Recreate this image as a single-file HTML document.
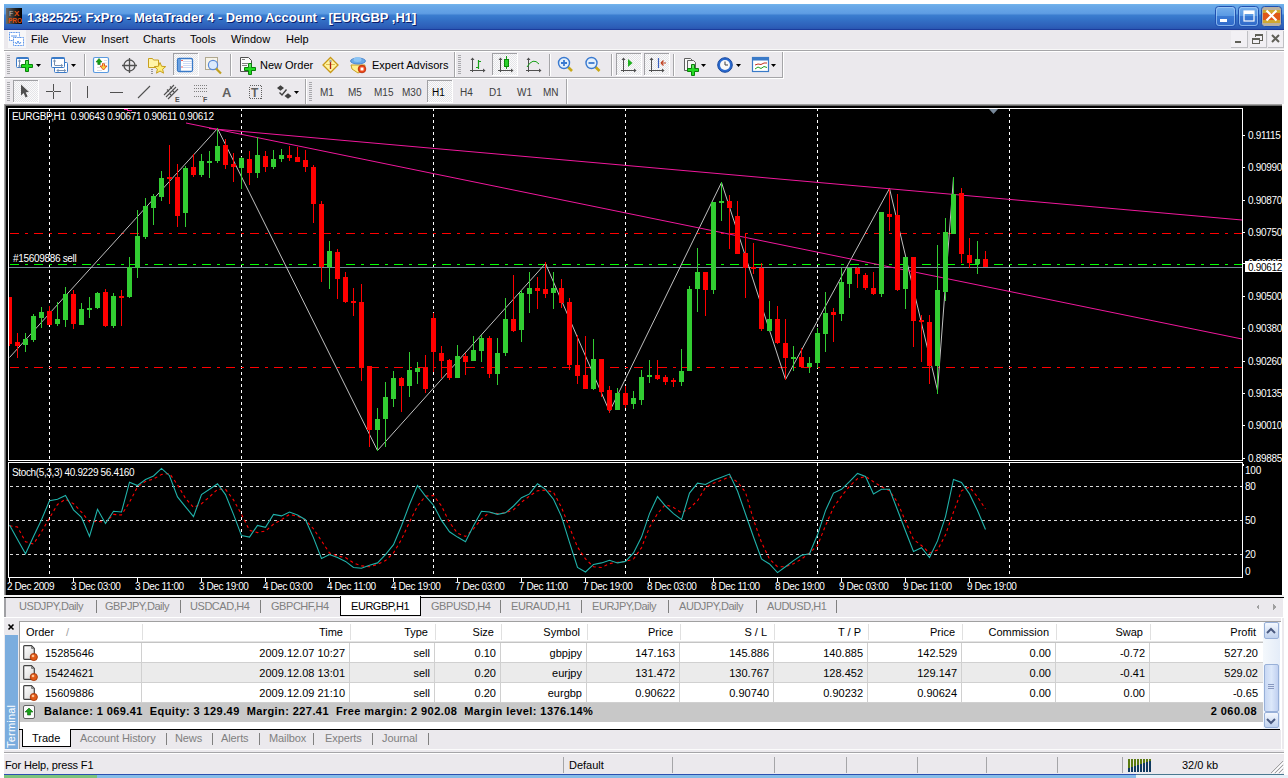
<!DOCTYPE html>
<html><head><meta charset="utf-8"><style>
html,body{margin:0;padding:0;}
body{width:1288px;height:778px;position:relative;overflow:hidden;background:#fff;font-family:'Liberation Sans', sans-serif;}
.a{position:absolute;}
.t{position:absolute;white-space:pre;font-size:11px;line-height:13px;color:#000;}
</style></head><body>
<div class="a" style="left:4px;top:4px;width:1280px;height:771px;background:#ebe9ed"></div>
<!-- title bar -->
<div class="a" style="left:4px;top:4px;width:1280px;height:26px;background:linear-gradient(to bottom,#72b6ec 0px,#6aa9e8 2px,#5f9ee4 9px,#5a98e0 10px,#3b7ed0 11px,#3473c8 15px,#2d5eb8 23px,#2a55b0 25px,#1c3c9c 25px,#1c3c9c 26px)"></div>
<div class="t" style="left:27px;top:10px;font-size:13px;line-height:15px;font-weight:bold;color:#fff;text-shadow:1px 1px 0 #0a1e6e">1382525: FxPro - MetaTrader 4 - Demo Account - [EURGBP ,H1]</div>
<!-- fxpro icon -->
<svg class="a" style="left:6px;top:8px" width="16" height="16">
<defs><linearGradient id="fxg" x1="0" y1="0" x2="1" y2="0"><stop offset="0" stop-color="#6a6a6a"/><stop offset="0.6" stop-color="#202020"/><stop offset="1" stop-color="#000"/></linearGradient></defs>
<rect width="16" height="16" fill="url(#fxg)"/>
<text x="3" y="8" font-family="Liberation Sans" font-size="7" fill="#c0c0c0">F</text>
<text x="8" y="8" font-family="Liberation Sans" font-size="8" font-weight="bold" fill="#e05010">X</text>
<text x="2" y="15" font-family="Liberation Sans" font-size="6.5" font-weight="bold" fill="#e05010">PRO</text>
</svg>
<!-- title buttons -->
<svg class="a" style="left:1214px;top:5px" width="70" height="24">
<defs><linearGradient id="tbg" x1="0" y1="0" x2="0" y2="1"><stop offset="0" stop-color="#78b0ec"/><stop offset="0.45" stop-color="#5a9ae4"/><stop offset="0.5" stop-color="#3a7ad4"/><stop offset="1" stop-color="#3068c8"/></linearGradient></defs>
<rect x="1.5" y="1.5" width="20" height="20" rx="3" fill="url(#tbg)" stroke="#2050b0"/>
<rect x="2.5" y="2.5" width="18" height="18" rx="2.5" fill="none" stroke="#a8d0f8" stroke-opacity="0.7"/>
<rect x="6" y="14" width="7" height="3" fill="#fff"/>
<rect x="24.5" y="1.5" width="20" height="20" rx="3" fill="url(#tbg)" stroke="#2050b0"/>
<rect x="25.5" y="2.5" width="18" height="18" rx="2.5" fill="none" stroke="#a8d0f8" stroke-opacity="0.7"/>
<rect x="30" y="6" width="10" height="10" fill="none" stroke="#fff" stroke-width="1.2"/><rect x="30" y="6" width="10" height="3" fill="#fff"/>
<rect x="47.5" y="1.5" width="20" height="20" rx="3" fill="#b8b0a0" stroke="#2050b0"/>
<rect x="49" y="5" width="17" height="13" fill="#d0a830"/><rect x="49" y="8" width="17" height="7" fill="#e05818"/>
<path d="M52.5 5.5 L62.5 15.5 M62.5 5.5 L52.5 15.5" stroke="#fff" stroke-width="2.2"/>
</svg>
<!-- menu icon -->
<svg class="a" style="left:8px;top:30px" width="18" height="18">
<rect x="0" y="0" width="18" height="18" fill="#f6f6f8"/>
<rect x="1.5" y="2.5" width="10" height="8" fill="#fff" stroke="#4a8ae8" stroke-dasharray="1 0.6"/>
<rect x="5.5" y="7.5" width="10" height="8" fill="#fff" stroke="#4a8ae8" stroke-dasharray="1 0.6"/>
<path d="M3 6 h6 M7 12 l1.5 2 l1.5 -3 l1.5 3 l1.5 -2" fill="none" stroke="#4a8ae8" stroke-width="0.9"/>
</svg>
<!-- MDI buttons -->
<svg class="a" style="left:1230px;top:30px" width="54" height="19" shape-rendering="crispEdges">
<rect x="1" y="1" width="16" height="17" fill="#f2f0f4"/><rect x="17" y="1" width="1" height="17" fill="#c0c0c4"/><rect x="1" y="17" width="17" height="1" fill="#c0c0c4"/>
<rect x="20" y="1" width="16" height="17" fill="#f2f0f4"/><rect x="36" y="1" width="1" height="17" fill="#c0c0c4"/><rect x="20" y="17" width="17" height="1" fill="#c0c0c4"/>
<rect x="38" y="1" width="16" height="17" fill="#f2f0f4"/><rect x="53" y="1" width="1" height="17" fill="#c0c0c4"/><rect x="38" y="17" width="16" height="1" fill="#c0c0c4"/>
<rect x="5" y="11" width="6" height="2" fill="#606058"/>
<rect x="22.5" y="8.5" width="7" height="5" fill="none" stroke="#606058"/><rect x="22" y="8" width="8" height="2" fill="#606058"/>
<path d="M25.5 7 V4.5 H32.5 V10.5 H30" fill="none" stroke="#606058"/><rect x="25" y="4" width="8" height="2" fill="#606058"/>
<path d="M42 5 L49 12 M49 5 L42 12" stroke="#606058" stroke-width="2" shape-rendering="auto"/>
</svg>
<!-- menu -->
<div class="a" style="left:4px;top:49px;width:1280px;height:1px;background:#f8f8f8"></div>
<div class="a" style="left:4px;top:50px;width:1280px;height:1px;background:#a5a5a8"></div>
<div class="a" style="left:4px;top:51px;width:1280px;height:1px;background:#fff"></div>
<div class="t" style="left:31px;top:33px">File</div>
<div class="t" style="left:62px;top:33px">View</div>
<div class="t" style="left:101px;top:33px">Insert</div>
<div class="t" style="left:143px;top:33px">Charts</div>
<div class="t" style="left:190px;top:33px">Tools</div>
<div class="t" style="left:231px;top:33px">Window</div>
<div class="t" style="left:286px;top:33px">Help</div>
<div class="a" style="left:4px;top:77px;width:779px;height:1px;background:#a5a5a8"></div>
<div class="a" style="left:4px;top:78px;width:780px;height:1px;background:#fff"></div>
<svg width="1288" height="54" viewBox="0 50 1288 54" style="position:absolute;left:0;top:50px" shape-rendering="crispEdges">
<defs><pattern id="chk" width="2" height="2" patternUnits="userSpaceOnUse"><rect width="2" height="2" fill="#fbfbfb"/><rect width="1" height="1" fill="#e4e4e8"/><rect x="1" y="1" width="1" height="1" fill="#e4e4e8"/></pattern></defs>
<rect x="454" y="52" width="1" height="25" fill="#a5a5a8"/><rect x="455" y="52" width="1" height="25" fill="#fff"/>
<rect x="782" y="52" width="1" height="26" fill="#a5a5a8"/><rect x="783" y="52" width="1" height="27" fill="#fff"/>
<rect x="4" y="52" width="1" height="25" fill="#fff"/>
<rect x="305" y="79" width="1" height="25" fill="#a5a5a8"/><rect x="306" y="79" width="1" height="25" fill="#fff"/>
<rect x="566" y="79" width="1" height="25" fill="#a5a5a8"/><rect x="567" y="79" width="1" height="25" fill="#fff"/>
<rect x="4" y="79" width="1" height="25" fill="#fff"/>
<rect x="7" y="55" width="3" height="1" fill="#a8a8ac"/><rect x="7" y="57" width="3" height="1" fill="#a8a8ac"/><rect x="7" y="59" width="3" height="1" fill="#a8a8ac"/><rect x="7" y="61" width="3" height="1" fill="#a8a8ac"/><rect x="7" y="63" width="3" height="1" fill="#a8a8ac"/><rect x="7" y="65" width="3" height="1" fill="#a8a8ac"/><rect x="7" y="67" width="3" height="1" fill="#a8a8ac"/><rect x="7" y="69" width="3" height="1" fill="#a8a8ac"/><rect x="7" y="71" width="3" height="1" fill="#a8a8ac"/><rect x="7" y="73" width="3" height="1" fill="#a8a8ac"/>
<rect x="458" y="55" width="3" height="1" fill="#a8a8ac"/><rect x="458" y="57" width="3" height="1" fill="#a8a8ac"/><rect x="458" y="59" width="3" height="1" fill="#a8a8ac"/><rect x="458" y="61" width="3" height="1" fill="#a8a8ac"/><rect x="458" y="63" width="3" height="1" fill="#a8a8ac"/><rect x="458" y="65" width="3" height="1" fill="#a8a8ac"/><rect x="458" y="67" width="3" height="1" fill="#a8a8ac"/><rect x="458" y="69" width="3" height="1" fill="#a8a8ac"/><rect x="458" y="71" width="3" height="1" fill="#a8a8ac"/><rect x="458" y="73" width="3" height="1" fill="#a8a8ac"/>
<rect x="7" y="82" width="3" height="1" fill="#a8a8ac"/><rect x="7" y="84" width="3" height="1" fill="#a8a8ac"/><rect x="7" y="86" width="3" height="1" fill="#a8a8ac"/><rect x="7" y="88" width="3" height="1" fill="#a8a8ac"/><rect x="7" y="90" width="3" height="1" fill="#a8a8ac"/><rect x="7" y="92" width="3" height="1" fill="#a8a8ac"/><rect x="7" y="94" width="3" height="1" fill="#a8a8ac"/><rect x="7" y="96" width="3" height="1" fill="#a8a8ac"/><rect x="7" y="98" width="3" height="1" fill="#a8a8ac"/><rect x="7" y="100" width="3" height="1" fill="#a8a8ac"/>
<rect x="309" y="82" width="3" height="1" fill="#a8a8ac"/><rect x="309" y="84" width="3" height="1" fill="#a8a8ac"/><rect x="309" y="86" width="3" height="1" fill="#a8a8ac"/><rect x="309" y="88" width="3" height="1" fill="#a8a8ac"/><rect x="309" y="90" width="3" height="1" fill="#a8a8ac"/><rect x="309" y="92" width="3" height="1" fill="#a8a8ac"/><rect x="309" y="94" width="3" height="1" fill="#a8a8ac"/><rect x="309" y="96" width="3" height="1" fill="#a8a8ac"/><rect x="309" y="98" width="3" height="1" fill="#a8a8ac"/><rect x="309" y="100" width="3" height="1" fill="#a8a8ac"/>
<g shape-rendering="auto">
<rect x="16.5" y="57.5" width="12" height="10" rx="1" fill="#fdfdff" stroke="#3a7ac8"/><rect x="16.5" y="57.5" width="12" height="1.5" fill="#3a7ac8"/>
<path d="M19.5 60.5 v6" stroke="#7890b0" stroke-width="1"/><path d="M17.8 61.5 L19.5 59.3 L21.2 61.5 Z M17.8 65.5 L19.5 67.7 L21.2 65.5 Z" fill="#7890b0"/>
<path d="M25.5 60.5 h3 v4 h4 v3 h-4 v4 h-3 v-4 h-4 v-3 h4 z" fill="#22dc22" stroke="#0a800a" stroke-width="1"/><rect x="26" y="61" width="2" height="3" fill="#a0f0a0" opacity="0.5"/>
<path d="M36 64 h5 l-2.5 3 z" fill="#000" shape-rendering="auto"/>
<rect x="54.5" y="62.5" width="13" height="10" rx="1" fill="#fdfdff" stroke="#3a7ac8"/>
<rect x="51.5" y="57.5" width="13" height="10" rx="1" fill="#fdfdff" stroke="#3a7ac8"/><rect x="51.5" y="57.5" width="13" height="1.5" fill="#3a7ac8"/>
<path d="M54.5 65.5 H61.5 M54.5 60.5 V65 M58 70.5 H64.5" stroke="#7890b0" stroke-width="1"/><path d="M52.8 61.5 L54.5 59.3 L56.2 61.5 Z M61 63.8 L63.2 65.5 L61 67.2 Z M64 68.8 L66.2 70.5 L64 72.2 Z M58.5 68.8 L56.3 70.5 L58.5 72.2 Z" fill="#7890b0"/>
<path d="M71 64 h5 l-2.5 3 z" fill="#000" shape-rendering="auto"/>
</g>
<rect x="84" y="54" width="1" height="22" fill="#a5a5a8"/><rect x="85" y="54" width="1" height="22" fill="#fff"/>
<g shape-rendering="auto">
<rect x="93.5" y="57.5" width="15" height="15" rx="1.5" fill="#fff" stroke="#5a9ae0" stroke-width="1.2"/>
<path d="M96 62 L99 58.5 L102 62 H100.2 V64.5 H97.8 V62 Z" fill="#18a018" stroke="#0a7a0a" stroke-width="0.6"/>
<path d="M100 66 H102.5 V63.5 H104.5 V66 H107 L103.5 70 Z" fill="#f8d040" stroke="#e04818" stroke-width="0.9"/>
<path d="M97 67.5 H100 M97 70.5 H102 M104 60.5 H107 M103 63 H107" stroke="#d0d0d8" stroke-width="0.8"/>
<circle cx="129.5" cy="65.5" r="5.5" fill="none" stroke="#505050" stroke-width="1.3"/>
<path d="M129.5 58 V73 M122 65.5 H137" stroke="#505050" stroke-width="1.3"/>
<path d="M148.5 58.5 h4 l1 1.5 h5 v7.5 h-10 z" fill="#fff4a8" stroke="#c8a020" stroke-width="1"/>
<path d="M152 69 v5" stroke="#404040" stroke-dasharray="1 1"/>
<path d="M160 62.5 L161.6 66.3 L165.7 66.6 L162.6 69.2 L163.5 73.2 L160 71 L156.5 73.2 L157.4 69.2 L154.3 66.6 L158.4 66.3 Z" fill="#fff07a" stroke="#c8a020" stroke-width="1"/>
</g>
<rect x="173" y="53" width="25" height="22" fill="url(#chk)"/><rect x="173" y="53" width="25" height="1" fill="#a0a0a4"/><rect x="173" y="53" width="1" height="22" fill="#a0a0a4"/><rect x="173" y="75" width="26" height="1" fill="#fff"/><rect x="198" y="53" width="1" height="23" fill="#fff"/>
<g shape-rendering="auto">
<rect x="177.5" y="58.5" width="15" height="13" rx="1.5" fill="#fff" stroke="#3a7ac8" stroke-width="1.3"/><rect x="178" y="59" width="3" height="12" fill="#6aa0e0"/>
<path d="M183 61.5 H192 M183 63.5 H192 M183 65.5 H192 M183 67.5 H192" stroke="#c0d0f0" stroke-width="0.8"/>
<path d="M182 60 v1 M182 66.5 v1" stroke="#e00000" stroke-width="1.2"/>
<rect x="205.5" y="57.5" width="12" height="12" fill="#f8f4e8" stroke="#b0a890"/>
<circle cx="213" cy="65" r="4.6" fill="#dceafc" stroke="#5a8ad8" stroke-width="1.2"/>
<path d="M216 68.5 L221 73.5" stroke="#c0a020" stroke-width="2.2"/>
</g>
<rect x="230" y="54" width="1" height="22" fill="#a5a5a8"/><rect x="231" y="54" width="1" height="22" fill="#fff"/>
<g shape-rendering="auto">
<path d="M240.5 57.5 h8 l3 3 v11 h-11 z" fill="#fafafa" stroke="#505050" stroke-width="1"/>
<path d="M242 59.5 h3 M242 63.5 h6 M242 65.5 h5" stroke="#808080" stroke-width="1"/>
<path d="M248.5 63.5 h3 v4 h4 v3 h-4 v4 h-3 v-4 h-4 v-3 h4 z" fill="#22dc22" stroke="#0a800a" stroke-width="1"/><rect x="249" y="64" width="2" height="3" fill="#a0f0a0" opacity="0.5"/>
</g>
<text x="260" y="69" font-family="Liberation Sans" font-size="11" fill="#000">New Order</text>
<g shape-rendering="auto">
<path d="M330.5 57.5 L338 65 L330.5 72.5 L323 65 Z" fill="#fff4a0" stroke="#c89818" stroke-width="1.3"/>
<path d="M326 64.5 H335" stroke="#d8b040" stroke-width="0.8"/><path d="M330.5 61 V69" stroke="#b02010" stroke-width="1.3"/><circle cx="330.5" cy="61" r="1.2" fill="#a0a0a0"/>
<path d="M351 65 L365 65 L364 70 L358 73 L352 69 Z" fill="#fff090" stroke="#c8a020" stroke-width="1"/>
<ellipse cx="358" cy="61" rx="7.5" ry="3" fill="#6aaae8" stroke="#3a7ac8" stroke-width="0.8"/><ellipse cx="357.5" cy="59.5" rx="4" ry="2.5" fill="#8cc4f4"/>
<circle cx="362" cy="69" r="3.8" fill="#f04818" stroke="#b02808" stroke-width="0.8"/><rect x="360.5" y="67.5" width="3" height="3" fill="#fff"/>
</g>
<text x="372" y="69" font-family="Liberation Sans" font-size="11" fill="#000">Expert Advisors</text>
<g shape-rendering="auto">
<path d="M472.5 58 V72 M470 70.5 H485" stroke="#505050" stroke-width="1"/><path d="M470.5 60 l2 -2.5 l2 2.5 z M483 68.5 l2.5 2 l-2.5 2 z" fill="#505050"/>
<path d="M478.5 60 V69 M476 67.5 H478.5 M478.5 61.5 H481" stroke="#18a018" stroke-width="1.2"/>
</g>
<rect x="492" y="53" width="25" height="22" fill="url(#chk)"/><rect x="492" y="53" width="25" height="1" fill="#a0a0a4"/><rect x="492" y="53" width="1" height="22" fill="#a0a0a4"/><rect x="492" y="75" width="26" height="1" fill="#fff"/><rect x="517" y="53" width="1" height="23" fill="#fff"/>
<g shape-rendering="auto">
<path d="M500.5 58 V72 M498 70.5 H513" stroke="#505050" stroke-width="1"/><path d="M498.5 60 l2 -2.5 l2 2.5 z M511 68.5 l2.5 2 l-2.5 2 z" fill="#505050"/>
<path d="M506.5 56 V69" stroke="#18a018" stroke-width="1"/><rect x="504.5" y="59.5" width="4" height="7" fill="#2ad02a" stroke="#0a8a0a" stroke-width="1"/>
<path d="M528.5 58 V72 M526 70.5 H541" stroke="#505050" stroke-width="1"/><path d="M526.5 60 l2 -2.5 l2 2.5 z M539 68.5 l2.5 2 l-2.5 2 z" fill="#505050"/>
<path d="M527 67 Q533 57 539 64" fill="none" stroke="#18a018" stroke-width="1"/>
</g>
<rect x="549" y="54" width="1" height="22" fill="#a5a5a8"/><rect x="550" y="54" width="1" height="22" fill="#fff"/>
<g shape-rendering="auto">
<path d="M567 66 L572 71" stroke="#c8a818" stroke-width="2.6"/>
<circle cx="564" cy="63" r="5.5" fill="#e4f0fc" stroke="#3a7ad0" stroke-width="1.4"/>
<path d="M561 63 H567 M564 60 V66" stroke="#3a7ad0" stroke-width="1.8"/>
<path d="M594.5 66 L599.5 71" stroke="#c8a818" stroke-width="2.6"/>
<circle cx="591.5" cy="63" r="5.5" fill="#e4f0fc" stroke="#3a7ad0" stroke-width="1.4"/>
<path d="M588.5 63 H594.5" stroke="#3a7ad0" stroke-width="1.8"/>
</g>
<rect x="611" y="54" width="1" height="22" fill="#a5a5a8"/><rect x="612" y="54" width="1" height="22" fill="#fff"/>
<rect x="616" y="53" width="25" height="22" fill="url(#chk)"/><rect x="616" y="53" width="25" height="1" fill="#a0a0a4"/><rect x="616" y="53" width="1" height="22" fill="#a0a0a4"/><rect x="616" y="75" width="26" height="1" fill="#fff"/><rect x="641" y="53" width="1" height="23" fill="#fff"/>
<rect x="644" y="53" width="25" height="22" fill="url(#chk)"/><rect x="644" y="53" width="25" height="1" fill="#a0a0a4"/><rect x="644" y="53" width="1" height="22" fill="#a0a0a4"/><rect x="644" y="75" width="26" height="1" fill="#fff"/><rect x="669" y="53" width="1" height="23" fill="#fff"/>
<g shape-rendering="auto">
<path d="M623.5 58 V72 M621 70.5 H636" stroke="#505050" stroke-width="1"/><path d="M621.5 60 l2 -2.5 l2 2.5 z M634 68.5 l2.5 2 l-2.5 2 z" fill="#505050"/>
<path d="M628 59 L632.5 63 L628 67 Z" fill="#20b020"/>
<path d="M651.5 58 V72 M649 70.5 H664" stroke="#505050" stroke-width="1"/><path d="M649.5 60 l2 -2.5 l2 2.5 z M662 68.5 l2.5 2 l-2.5 2 z" fill="#505050"/>
<path d="M658.5 58 V68" stroke="#3a60c0" stroke-width="1.2"/><path d="M661 63 L666 63 M661 63 l2.5 -2.5 M661 63 l2.5 2.5" stroke="#c04020" stroke-width="1.2"/>
</g>
<rect x="673" y="54" width="1" height="22" fill="#a5a5a8"/><rect x="674" y="54" width="1" height="22" fill="#fff"/>
<g shape-rendering="auto">
<path d="M684.5 58.5 h6 l2 2 v10 h-8 z" fill="#fafafa" stroke="#606060"/><path d="M687.5 60.5 h6 l2 2 v7 h-8 z" fill="#f4f4f4" stroke="#606060"/>
<path d="M691.5 64.5 h3 v4 h4 v3 h-4 v4 h-3 v-4 h-4 v-3 h4 z" fill="#22dc22" stroke="#0a800a" stroke-width="1"/><rect x="692" y="65" width="2" height="3" fill="#a0f0a0" opacity="0.5"/>
<path d="M701 64 h5 l-2.5 3 z" fill="#000" shape-rendering="auto"/>
<circle cx="725" cy="65" r="7.3" fill="#2a6ad0" stroke="#1a4aa0" stroke-width="1"/><circle cx="725" cy="65" r="5" fill="#f8f8f8"/><path d="M725 61.5 V65 H728" stroke="#404040" stroke-width="1" fill="none"/>
<path d="M736 64 h5 l-2.5 3 z" fill="#000" shape-rendering="auto"/>
<rect x="752.5" y="57.5" width="16" height="14" fill="#fff" stroke="#3a7ac8" stroke-width="1.2"/><rect x="753" y="58" width="15" height="2.5" fill="#3a7ac8"/>
<path d="M755 65 l3 -1 l3 0.5 l3 -1.5 l3 0" fill="none" stroke="#c03020" stroke-width="1"/><path d="M755 69 l3 -2 l3 1.5 l3 -2 l3 1" fill="none" stroke="#20a020" stroke-width="1"/>
<path d="M771 64 h5 l-2.5 3 z" fill="#000" shape-rendering="auto"/>
</g>
<rect x="13" y="80" width="25" height="22" fill="url(#chk)"/><rect x="13" y="80" width="25" height="1" fill="#a0a0a4"/><rect x="13" y="80" width="1" height="22" fill="#a0a0a4"/><rect x="13" y="102" width="26" height="1" fill="#fff"/><rect x="38" y="80" width="1" height="23" fill="#fff"/>
<g shape-rendering="auto">
<path d="M21 84.5 L21 95.5 L23.6 93 L25.6 97.5 L27.6 96.6 L25.7 92.3 L29 92 Z" fill="#505050"/>
</g>
<path d="M46 91.5 H61 M53.5 84 V99" stroke="#505050" stroke-width="1"/><rect x="53" y="91" width="1" height="1" fill="#ebe9ed"/>
<rect x="70" y="82" width="1" height="20" fill="#a5a5a8"/><rect x="71" y="82" width="1" height="20" fill="#fff"/>
<rect x="87" y="86" width="1" height="12" fill="#505050"/>
<rect x="110" y="92" width="13" height="1" fill="#505050"/>
<g shape-rendering="auto">
<path d="M138 98 L150 86" stroke="#505050" stroke-width="1.1"/>
<path d="M164 95 L174 85 M166 97 L176 87 M168 99 L178 89 M167 89.5 L169 91.5 M170 86.5 L172 88.5 M169 93 L171 95 M172 90 L174 92" stroke="#505050" stroke-width="1.1"/>
<text x="175" y="102" font-family="Liberation Sans" font-size="7" font-weight="bold" fill="#505050">E</text>
</g>
<path d="M193.5 85 H207 M193.5 88 H207 M193.5 91 H207 M193.5 96 H203" stroke="#808080" stroke-dasharray="1 1"/>
<text x="203" y="102" font-family="Liberation Sans" font-size="7" font-weight="bold" fill="#505050">F</text>
<text x="222" y="97" font-family="Liberation Sans" font-size="13" font-weight="bold" fill="#606060" shape-rendering="auto">A</text>
<rect x="249.5" y="85.5" width="12" height="13" fill="none" stroke="#606060" stroke-dasharray="1 1"/>
<text x="251" y="97" font-family="Liberation Sans" font-size="12" font-weight="bold" fill="#606060">T</text>
<g shape-rendering="auto">
<path d="M277 88 l3.5 -2.8 l3.5 2.8 l-3.5 2.8 z M284.5 96 l3.5 -2.8 l3.5 2.8 l-3.5 2.8 z" fill="#404040"/><path d="M279.5 92.5 L282 95 L286.5 89.5" fill="none" stroke="#404040" stroke-width="1.4"/>
<path d="M294 91 h5 l-2.5 3 z" fill="#000" shape-rendering="auto"/>
</g>
<rect x="427" y="80" width="25" height="22" fill="url(#chk)"/><rect x="427" y="80" width="25" height="1" fill="#a0a0a4"/><rect x="427" y="80" width="1" height="22" fill="#a0a0a4"/><rect x="427" y="102" width="26" height="1" fill="#fff"/><rect x="452" y="80" width="1" height="23" fill="#fff"/>
</svg>
<div class="t" style="left:320px;top:86px;font-size:10px;color:#404040">M1</div>
<div class="t" style="left:348px;top:86px;font-size:10px;color:#404040">M5</div>
<div class="t" style="left:374px;top:86px;font-size:10px;color:#404040">M15</div>
<div class="t" style="left:402px;top:86px;font-size:10px;color:#404040">M30</div>
<div class="t" style="left:432px;top:86px;font-size:10px;color:#000">H1</div>
<div class="t" style="left:460px;top:86px;font-size:10px;color:#404040">H4</div>
<div class="t" style="left:489px;top:86px;font-size:10px;color:#404040">D1</div>
<div class="t" style="left:517px;top:86px;font-size:10px;color:#404040">W1</div>
<div class="t" style="left:543px;top:86px;font-size:10px;color:#404040">MN</div>
<svg width="1280" height="492" viewBox="4 104 1280 492" style="position:absolute;left:4px;top:104px" shape-rendering="crispEdges">
<rect x="4" y="104" width="1280" height="492" fill="#000"/>
<rect x="4" y="104" width="1280" height="1" fill="#a0a0a0"/>
<rect x="4" y="105" width="1280" height="1" fill="#696969"/>
<rect x="4" y="104" width="1" height="492" fill="#a0a0a0"/>
<rect x="5" y="105" width="1" height="491" fill="#696969"/>
<rect x="1282" y="104" width="2" height="492" fill="#fff"/>
<line x1="49.5" y1="108" x2="49.5" y2="460" stroke="#fff" stroke-dasharray="3 3"/>
<line x1="49.5" y1="463" x2="49.5" y2="577" stroke="#fff" stroke-dasharray="3 3"/>
<line x1="241.5" y1="108" x2="241.5" y2="460" stroke="#fff" stroke-dasharray="3 3"/>
<line x1="241.5" y1="463" x2="241.5" y2="577" stroke="#fff" stroke-dasharray="3 3"/>
<line x1="433.5" y1="108" x2="433.5" y2="460" stroke="#fff" stroke-dasharray="3 3"/>
<line x1="433.5" y1="463" x2="433.5" y2="577" stroke="#fff" stroke-dasharray="3 3"/>
<line x1="625.5" y1="108" x2="625.5" y2="460" stroke="#fff" stroke-dasharray="3 3"/>
<line x1="625.5" y1="463" x2="625.5" y2="577" stroke="#fff" stroke-dasharray="3 3"/>
<line x1="817.5" y1="108" x2="817.5" y2="460" stroke="#fff" stroke-dasharray="3 3"/>
<line x1="817.5" y1="463" x2="817.5" y2="577" stroke="#fff" stroke-dasharray="3 3"/>
<line x1="1009.5" y1="108" x2="1009.5" y2="460" stroke="#fff" stroke-dasharray="3 3"/>
<line x1="1009.5" y1="463" x2="1009.5" y2="577" stroke="#fff" stroke-dasharray="3 3"/>
<line x1="10" y1="486.5" x2="1242" y2="486.5" stroke="#d8d8d8" stroke-dasharray="3 3"/>
<line x1="10" y1="520.5" x2="1242" y2="520.5" stroke="#d8d8d8" stroke-dasharray="3 3"/>
<line x1="10" y1="554.5" x2="1242" y2="554.5" stroke="#d8d8d8" stroke-dasharray="3 3"/>
<line x1="10" y1="233.5" x2="1242" y2="233.5" stroke="#ff0000" stroke-dasharray="9 6 3 6"/>
<line x1="10" y1="367.5" x2="1242" y2="367.5" stroke="#ff0000" stroke-dasharray="9 6 3 6"/>
<line x1="10" y1="264.5" x2="1242" y2="264.5" stroke="#00ff00" stroke-dasharray="9 6 3 6"/>
<rect x="9" y="267" width="1233" height="1" fill="#778899"/>
<defs><clipPath id="cm"><rect x="9" y="109" width="1233" height="351"/></clipPath><clipPath id="cs"><rect x="9" y="463" width="1233" height="114"/></clipPath></defs>
<g clip-path="url(#cm)" shape-rendering="auto"><polyline points="9.5,357.5 217.5,128.5 377.5,450.5 545.5,263.5 609.5,411.5 721.5,182.5 785.5,379.5 889.5,188.5 937.5,390.5 953.5,177.5" fill="none" stroke="#c0c0c0" stroke-width="1"/>
<line x1="186" y1="123" x2="1242" y2="339" stroke="#f0189c" stroke-width="1"/>
<line x1="209" y1="128.5" x2="1242" y2="220" stroke="#f0189c" stroke-width="1"/></g>
<rect x="124" y="109" width="4" height="1" fill="#f0189c"/><rect x="127" y="110" width="5" height="1" fill="#f0189c"/>
<g clip-path="url(#cs)" shape-rendering="auto"><polyline points="9.5,525.7 17.5,527 25.5,541.7 33.5,544 41.5,531.8 49.5,518 57.5,504.5 65.5,499.2 73.5,503.7 81.5,512 89.5,522 97.5,521.2 105.5,522.7 113.5,514.4 121.5,515 129.5,502.2 137.5,487 145.5,481.4 153.5,479 161.5,474.5 169.5,473.4 177.5,484.8 185.5,498.4 193.5,507.5 201.5,503.7 209.5,496.9 217.5,489.3 225.5,489.3 233.5,499.9 241.5,514.4 249.5,530.3 257.5,532.6 265.5,531 273.5,524.2 281.5,519.7 289.5,514.4 297.5,516.2 305.5,520 313.5,528.8 321.5,540.9 329.5,553 337.5,556 345.5,557.6 353.5,562.9 361.5,565.9 369.5,566.7 377.5,564.4 385.5,560.6 393.5,553 401.5,539.4 409.5,522 417.5,506 425.5,496.1 433.5,495.4 441.5,506 449.5,522.4 457.5,533.3 465.5,536.4 473.5,528.8 481.5,518.9 489.5,512.5 497.5,513.6 505.5,512.8 513.5,509.8 521.5,502.2 529.5,496.1 537.5,490.8 545.5,490.1 553.5,492.3 561.5,507.5 569.5,527.3 577.5,547 585.5,559 593.5,566.7 601.5,567.5 609.5,563.7 617.5,562.2 625.5,561.4 633.5,559.1 641.5,547.7 649.5,527.3 657.5,513.6 665.5,504.5 673.5,507.5 681.5,512.8 689.5,508.3 697.5,500.7 705.5,487.5 713.5,483.2 721.5,480.2 729.5,476.8 737.5,482 745.5,492.3 753.5,519.7 761.5,542.4 769.5,559.1 777.5,566.7 785.5,566.7 793.5,563.7 801.5,559.1 809.5,553 817.5,545.5 825.5,525.7 833.5,507.5 841.5,496.1 849.5,486.3 857.5,478.7 865.5,476.4 873.5,481.7 881.5,486.7 889.5,490.8 897.5,502.2 905.5,521.2 913.5,539.4 921.5,545.5 929.5,553 937.5,550 945.5,534.8 953.5,512 961.5,490.8 969.5,487 977.5,496.9 985.5,509" fill="none" stroke="#ff0000" stroke-width="1.1" stroke-dasharray="3 3"/>
<polyline points="9.5,525 17.5,539.4 25.5,553.8 33.5,536.4 41.5,519.7 49.5,500.7 57.5,499.2 65.5,495.4 73.5,509.8 81.5,517.4 89.5,536.4 97.5,509.3 105.5,523.5 113.5,511.3 121.5,512 129.5,482.2 137.5,485.5 145.5,479.5 153.5,476 161.5,468.4 169.5,475.7 177.5,496.9 185.5,506.8 193.5,516.6 201.5,494.6 209.5,489.3 217.5,483.7 225.5,494.6 233.5,514.4 241.5,535.6 249.5,537.1 257.5,525.4 265.5,527.3 273.5,514.4 281.5,515.9 289.5,512 297.5,515 305.5,519.7 313.5,537.9 321.5,558.4 329.5,554.6 337.5,557.6 345.5,561.4 353.5,567.5 361.5,568.2 369.5,565.2 377.5,562.9 385.5,554.6 393.5,544.7 401.5,525.7 409.5,504.5 417.5,485.5 425.5,496.1 433.5,505.2 441.5,520.4 449.5,531.8 457.5,537.1 465.5,541.7 473.5,525.7 481.5,511.3 489.5,512 497.5,514.4 505.5,512.8 513.5,506 521.5,497.7 529.5,493.9 537.5,483.7 545.5,489.3 553.5,499.2 561.5,516.6 569.5,542.4 577.5,567.5 585.5,572 593.5,564.4 601.5,562.9 609.5,560.3 617.5,562.9 625.5,561.4 633.5,553 641.5,537.1 649.5,513.6 657.5,496.6 665.5,506 673.5,513.6 681.5,519.7 689.5,493.1 697.5,483.2 705.5,484.5 713.5,480.2 721.5,477.2 729.5,474.1 737.5,491 745.5,514 753.5,537 761.5,559 769.5,564 777.5,572.6 785.5,566.7 793.5,560.6 801.5,555.3 809.5,553.8 817.5,534.8 825.5,510.6 833.5,493.1 841.5,489.3 849.5,481.7 857.5,473.4 865.5,476.4 873.5,493.9 881.5,489.3 889.5,489.3 897.5,510 905.5,531 913.5,551.5 921.5,547.7 929.5,557.6 937.5,540.9 945.5,516.6 953.5,479.5 961.5,482.5 969.5,493.9 977.5,510.6 985.5,529.5" fill="none" stroke="#20b2aa" stroke-width="1.1"/></g>
<g clip-path="url(#cm)">
<rect x="9" y="297" width="1" height="49" fill="#ff0000"/><rect x="7" y="297" width="5" height="47" fill="#ff0000"/>
<rect x="17" y="333" width="1" height="25" fill="#ff0000"/><rect x="15" y="342" width="5" height="4" fill="#ff0000"/>
<rect x="25" y="333" width="1" height="19" fill="#32cd32"/><rect x="23" y="339" width="5" height="6" fill="#32cd32"/>
<rect x="33" y="314" width="1" height="28" fill="#32cd32"/><rect x="31" y="316" width="5" height="24" fill="#32cd32"/>
<rect x="41" y="307" width="1" height="21" fill="#32cd32"/><rect x="39" y="312" width="5" height="6" fill="#32cd32"/>
<rect x="49" y="306" width="1" height="19" fill="#ff0000"/><rect x="47" y="311" width="5" height="14" fill="#ff0000"/>
<rect x="57" y="302" width="1" height="24" fill="#32cd32"/><rect x="55" y="319" width="5" height="5" fill="#32cd32"/>
<rect x="65" y="287" width="1" height="40" fill="#32cd32"/><rect x="63" y="294" width="5" height="26" fill="#32cd32"/>
<rect x="73" y="290" width="1" height="39" fill="#ff0000"/><rect x="71" y="294" width="5" height="30" fill="#ff0000"/>
<rect x="81" y="303" width="1" height="22" fill="#32cd32"/><rect x="79" y="309" width="5" height="16" fill="#32cd32"/>
<rect x="89" y="297" width="1" height="21" fill="#32cd32"/><rect x="87" y="308" width="5" height="2" fill="#32cd32"/>
<rect x="97" y="292" width="1" height="17" fill="#32cd32"/><rect x="95" y="293" width="5" height="15" fill="#32cd32"/>
<rect x="105" y="289" width="1" height="38" fill="#ff0000"/><rect x="103" y="292" width="5" height="34" fill="#ff0000"/>
<rect x="113" y="293" width="1" height="35" fill="#32cd32"/><rect x="111" y="296" width="5" height="30" fill="#32cd32"/>
<rect x="121" y="290" width="1" height="36" fill="#ff0000"/><rect x="119" y="296" width="5" height="2" fill="#ff0000"/>
<rect x="129" y="257" width="1" height="41" fill="#32cd32"/><rect x="127" y="267" width="5" height="30" fill="#32cd32"/>
<rect x="137" y="210" width="1" height="68" fill="#32cd32"/><rect x="135" y="236" width="5" height="32" fill="#32cd32"/>
<rect x="145" y="198" width="1" height="41" fill="#32cd32"/><rect x="143" y="206" width="5" height="31" fill="#32cd32"/>
<rect x="153" y="194" width="1" height="31" fill="#32cd32"/><rect x="151" y="196" width="5" height="12" fill="#32cd32"/>
<rect x="161" y="171" width="1" height="30" fill="#32cd32"/><rect x="159" y="178" width="5" height="19" fill="#32cd32"/>
<rect x="169" y="145" width="1" height="59" fill="#ff0000"/><rect x="167" y="177" width="5" height="2" fill="#ff0000"/>
<rect x="177" y="164" width="1" height="63" fill="#ff0000"/><rect x="175" y="177" width="5" height="39" fill="#ff0000"/>
<rect x="185" y="166" width="1" height="61" fill="#32cd32"/><rect x="183" y="168" width="5" height="45" fill="#32cd32"/>
<rect x="193" y="154" width="1" height="23" fill="#ff0000"/><rect x="191" y="167" width="5" height="8" fill="#ff0000"/>
<rect x="201" y="154" width="1" height="23" fill="#32cd32"/><rect x="199" y="161" width="5" height="14" fill="#32cd32"/>
<rect x="209" y="151" width="1" height="27" fill="#32cd32"/><rect x="207" y="161" width="5" height="2" fill="#32cd32"/>
<rect x="217" y="128" width="1" height="35" fill="#32cd32"/><rect x="215" y="146" width="5" height="15" fill="#32cd32"/>
<rect x="225" y="139" width="1" height="30" fill="#ff0000"/><rect x="223" y="145" width="5" height="20" fill="#ff0000"/>
<rect x="233" y="153" width="1" height="29" fill="#ff0000"/><rect x="231" y="164" width="5" height="3" fill="#ff0000"/>
<rect x="241" y="157" width="1" height="32" fill="#32cd32"/><rect x="239" y="158" width="5" height="10" fill="#32cd32"/>
<rect x="249" y="151" width="1" height="34" fill="#ff0000"/><rect x="247" y="159" width="5" height="14" fill="#ff0000"/>
<rect x="257" y="137" width="1" height="41" fill="#32cd32"/><rect x="255" y="155" width="5" height="18" fill="#32cd32"/>
<rect x="265" y="151" width="1" height="21" fill="#ff0000"/><rect x="263" y="156" width="5" height="11" fill="#ff0000"/>
<rect x="273" y="150" width="1" height="19" fill="#32cd32"/><rect x="271" y="159" width="5" height="8" fill="#32cd32"/>
<rect x="281" y="149" width="1" height="13" fill="#32cd32"/><rect x="279" y="155" width="5" height="4" fill="#32cd32"/>
<rect x="289" y="146" width="1" height="15" fill="#ff0000"/><rect x="287" y="155" width="5" height="3" fill="#ff0000"/>
<rect x="297" y="147" width="1" height="15" fill="#ff0000"/><rect x="295" y="157" width="5" height="5" fill="#ff0000"/>
<rect x="305" y="150" width="1" height="22" fill="#ff0000"/><rect x="303" y="160" width="5" height="7" fill="#ff0000"/>
<rect x="313" y="165" width="1" height="58" fill="#ff0000"/><rect x="311" y="167" width="5" height="37" fill="#ff0000"/>
<rect x="321" y="201" width="1" height="81" fill="#ff0000"/><rect x="319" y="204" width="5" height="63" fill="#ff0000"/>
<rect x="329" y="241" width="1" height="48" fill="#32cd32"/><rect x="327" y="251" width="5" height="16" fill="#32cd32"/>
<rect x="337" y="249" width="1" height="50" fill="#ff0000"/><rect x="335" y="252" width="5" height="27" fill="#ff0000"/>
<rect x="345" y="272" width="1" height="31" fill="#ff0000"/><rect x="343" y="277" width="5" height="25" fill="#ff0000"/>
<rect x="353" y="288" width="1" height="28" fill="#ff0000"/><rect x="351" y="301" width="5" height="2" fill="#ff0000"/>
<rect x="361" y="284" width="1" height="97" fill="#ff0000"/><rect x="359" y="302" width="5" height="66" fill="#ff0000"/>
<rect x="369" y="366" width="1" height="81" fill="#ff0000"/><rect x="367" y="366" width="5" height="64" fill="#ff0000"/>
<rect x="377" y="408" width="1" height="43" fill="#32cd32"/><rect x="375" y="419" width="5" height="11" fill="#32cd32"/>
<rect x="385" y="382" width="1" height="65" fill="#32cd32"/><rect x="383" y="397" width="5" height="22" fill="#32cd32"/>
<rect x="393" y="371" width="1" height="36" fill="#32cd32"/><rect x="391" y="378" width="5" height="21" fill="#32cd32"/>
<rect x="401" y="377" width="1" height="35" fill="#ff0000"/><rect x="399" y="378" width="5" height="8" fill="#ff0000"/>
<rect x="409" y="352" width="1" height="45" fill="#32cd32"/><rect x="407" y="370" width="5" height="16" fill="#32cd32"/>
<rect x="417" y="362" width="1" height="22" fill="#32cd32"/><rect x="415" y="368" width="5" height="4" fill="#32cd32"/>
<rect x="425" y="355" width="1" height="38" fill="#ff0000"/><rect x="423" y="367" width="5" height="22" fill="#ff0000"/>
<rect x="433" y="313" width="1" height="59" fill="#ff0000"/><rect x="431" y="318" width="5" height="34" fill="#ff0000"/>
<rect x="441" y="346" width="1" height="32" fill="#ff0000"/><rect x="439" y="353" width="5" height="8" fill="#ff0000"/>
<rect x="449" y="359" width="1" height="21" fill="#ff0000"/><rect x="447" y="360" width="5" height="18" fill="#ff0000"/>
<rect x="457" y="345" width="1" height="33" fill="#32cd32"/><rect x="455" y="356" width="5" height="22" fill="#32cd32"/>
<rect x="465" y="353" width="1" height="22" fill="#ff0000"/><rect x="463" y="356" width="5" height="6" fill="#ff0000"/>
<rect x="473" y="336" width="1" height="25" fill="#32cd32"/><rect x="471" y="350" width="5" height="11" fill="#32cd32"/>
<rect x="481" y="335" width="1" height="27" fill="#32cd32"/><rect x="479" y="338" width="5" height="13" fill="#32cd32"/>
<rect x="489" y="336" width="1" height="42" fill="#ff0000"/><rect x="487" y="338" width="5" height="36" fill="#ff0000"/>
<rect x="497" y="338" width="1" height="47" fill="#32cd32"/><rect x="495" y="353" width="5" height="21" fill="#32cd32"/>
<rect x="505" y="298" width="1" height="58" fill="#32cd32"/><rect x="503" y="319" width="5" height="34" fill="#32cd32"/>
<rect x="513" y="275" width="1" height="57" fill="#ff0000"/><rect x="511" y="319" width="5" height="12" fill="#ff0000"/>
<rect x="521" y="290" width="1" height="52" fill="#32cd32"/><rect x="519" y="293" width="5" height="37" fill="#32cd32"/>
<rect x="529" y="272" width="1" height="41" fill="#32cd32"/><rect x="527" y="288" width="5" height="6" fill="#32cd32"/>
<rect x="537" y="277" width="1" height="32" fill="#ff0000"/><rect x="535" y="288" width="5" height="3" fill="#ff0000"/>
<rect x="545" y="262" width="1" height="36" fill="#ff0000"/><rect x="543" y="289" width="5" height="5" fill="#ff0000"/>
<rect x="553" y="272" width="1" height="37" fill="#32cd32"/><rect x="551" y="288" width="5" height="5" fill="#32cd32"/>
<rect x="561" y="279" width="1" height="29" fill="#ff0000"/><rect x="559" y="288" width="5" height="15" fill="#ff0000"/>
<rect x="569" y="298" width="1" height="72" fill="#ff0000"/><rect x="567" y="302" width="5" height="63" fill="#ff0000"/>
<rect x="577" y="335" width="1" height="49" fill="#ff0000"/><rect x="575" y="365" width="5" height="11" fill="#ff0000"/>
<rect x="585" y="336" width="1" height="53" fill="#ff0000"/><rect x="583" y="375" width="5" height="14" fill="#ff0000"/>
<rect x="593" y="339" width="1" height="51" fill="#32cd32"/><rect x="591" y="359" width="5" height="30" fill="#32cd32"/>
<rect x="601" y="359" width="1" height="38" fill="#ff0000"/><rect x="599" y="359" width="5" height="33" fill="#ff0000"/>
<rect x="609" y="386" width="1" height="27" fill="#ff0000"/><rect x="607" y="390" width="5" height="20" fill="#ff0000"/>
<rect x="617" y="388" width="1" height="22" fill="#32cd32"/><rect x="615" y="393" width="5" height="17" fill="#32cd32"/>
<rect x="625" y="386" width="1" height="22" fill="#ff0000"/><rect x="623" y="393" width="5" height="12" fill="#ff0000"/>
<rect x="633" y="391" width="1" height="18" fill="#32cd32"/><rect x="631" y="398" width="5" height="6" fill="#32cd32"/>
<rect x="641" y="370" width="1" height="35" fill="#32cd32"/><rect x="639" y="377" width="5" height="23" fill="#32cd32"/>
<rect x="649" y="360" width="1" height="23" fill="#32cd32"/><rect x="647" y="375" width="5" height="2" fill="#32cd32"/>
<rect x="657" y="360" width="1" height="20" fill="#ff0000"/><rect x="655" y="375" width="5" height="4" fill="#ff0000"/>
<rect x="665" y="375" width="1" height="10" fill="#ff0000"/><rect x="663" y="377" width="5" height="5" fill="#ff0000"/>
<rect x="673" y="378" width="1" height="9" fill="#ff0000"/><rect x="671" y="380" width="5" height="2" fill="#ff0000"/>
<rect x="681" y="349" width="1" height="37" fill="#32cd32"/><rect x="679" y="371" width="5" height="11" fill="#32cd32"/>
<rect x="689" y="286" width="1" height="85" fill="#32cd32"/><rect x="687" y="289" width="5" height="82" fill="#32cd32"/>
<rect x="697" y="248" width="1" height="64" fill="#32cd32"/><rect x="695" y="272" width="5" height="17" fill="#32cd32"/>
<rect x="705" y="272" width="1" height="44" fill="#ff0000"/><rect x="703" y="272" width="5" height="18" fill="#ff0000"/>
<rect x="713" y="202" width="1" height="92" fill="#32cd32"/><rect x="711" y="202" width="5" height="88" fill="#32cd32"/>
<rect x="721" y="182" width="1" height="39" fill="#32cd32"/><rect x="719" y="201" width="5" height="2" fill="#32cd32"/>
<rect x="729" y="195" width="1" height="54" fill="#ff0000"/><rect x="727" y="201" width="5" height="7" fill="#ff0000"/>
<rect x="737" y="201" width="1" height="53" fill="#ff0000"/><rect x="735" y="216" width="5" height="38" fill="#ff0000"/>
<rect x="745" y="233" width="1" height="65" fill="#ff0000"/><rect x="743" y="253" width="5" height="15" fill="#ff0000"/>
<rect x="753" y="243" width="1" height="31" fill="#ff0000"/><rect x="751" y="267" width="5" height="2" fill="#ff0000"/>
<rect x="761" y="263" width="1" height="68" fill="#ff0000"/><rect x="759" y="268" width="5" height="61" fill="#ff0000"/>
<rect x="769" y="301" width="1" height="30" fill="#32cd32"/><rect x="767" y="319" width="5" height="12" fill="#32cd32"/>
<rect x="777" y="306" width="1" height="38" fill="#ff0000"/><rect x="775" y="319" width="5" height="24" fill="#ff0000"/>
<rect x="785" y="319" width="1" height="61" fill="#ff0000"/><rect x="783" y="343" width="5" height="15" fill="#ff0000"/>
<rect x="793" y="346" width="1" height="25" fill="#32cd32"/><rect x="791" y="357" width="5" height="2" fill="#32cd32"/>
<rect x="801" y="348" width="1" height="20" fill="#ff0000"/><rect x="799" y="357" width="5" height="10" fill="#ff0000"/>
<rect x="809" y="357" width="1" height="16" fill="#32cd32"/><rect x="807" y="363" width="5" height="4" fill="#32cd32"/>
<rect x="817" y="328" width="1" height="40" fill="#32cd32"/><rect x="815" y="333" width="5" height="30" fill="#32cd32"/>
<rect x="825" y="292" width="1" height="60" fill="#32cd32"/><rect x="823" y="313" width="5" height="21" fill="#32cd32"/>
<rect x="833" y="308" width="1" height="34" fill="#ff0000"/><rect x="831" y="312" width="5" height="3" fill="#ff0000"/>
<rect x="841" y="268" width="1" height="53" fill="#32cd32"/><rect x="839" y="282" width="5" height="32" fill="#32cd32"/>
<rect x="849" y="268" width="1" height="30" fill="#32cd32"/><rect x="847" y="268" width="5" height="16" fill="#32cd32"/>
<rect x="857" y="267" width="1" height="21" fill="#ff0000"/><rect x="855" y="268" width="5" height="6" fill="#ff0000"/>
<rect x="865" y="273" width="1" height="17" fill="#ff0000"/><rect x="863" y="275" width="5" height="13" fill="#ff0000"/>
<rect x="873" y="272" width="1" height="23" fill="#ff0000"/><rect x="871" y="288" width="5" height="6" fill="#ff0000"/>
<rect x="881" y="212" width="1" height="85" fill="#32cd32"/><rect x="879" y="212" width="5" height="82" fill="#32cd32"/>
<rect x="889" y="189" width="1" height="42" fill="#ff0000"/><rect x="887" y="214" width="5" height="3" fill="#ff0000"/>
<rect x="897" y="194" width="1" height="97" fill="#ff0000"/><rect x="895" y="215" width="5" height="75" fill="#ff0000"/>
<rect x="905" y="257" width="1" height="52" fill="#32cd32"/><rect x="903" y="257" width="5" height="32" fill="#32cd32"/>
<rect x="913" y="257" width="1" height="90" fill="#ff0000"/><rect x="911" y="257" width="5" height="64" fill="#ff0000"/>
<rect x="921" y="315" width="1" height="47" fill="#ff0000"/><rect x="919" y="320" width="5" height="2" fill="#ff0000"/>
<rect x="929" y="315" width="1" height="69" fill="#ff0000"/><rect x="927" y="322" width="5" height="44" fill="#ff0000"/>
<rect x="937" y="245" width="1" height="149" fill="#32cd32"/><rect x="935" y="290" width="5" height="76" fill="#32cd32"/>
<rect x="945" y="218" width="1" height="83" fill="#32cd32"/><rect x="943" y="232" width="5" height="60" fill="#32cd32"/>
<rect x="953" y="177" width="1" height="57" fill="#32cd32"/><rect x="951" y="194" width="5" height="40" fill="#32cd32"/>
<rect x="961" y="188" width="1" height="75" fill="#ff0000"/><rect x="959" y="193" width="5" height="61" fill="#ff0000"/>
<rect x="969" y="238" width="1" height="30" fill="#ff0000"/><rect x="967" y="255" width="5" height="8" fill="#ff0000"/>
<rect x="977" y="241" width="1" height="33" fill="#32cd32"/><rect x="975" y="259" width="5" height="5" fill="#32cd32"/>
<rect x="985" y="251" width="1" height="16" fill="#ff0000"/><rect x="983" y="259" width="5" height="8" fill="#ff0000"/>
</g>
</svg>
<svg width="1280" height="492" viewBox="4 104 1280 492" style="position:absolute;left:4px;top:104px" shape-rendering="crispEdges">
<rect x="8.5" y="108.5" width="1234" height="352" fill="none" stroke="#fff"/>
<rect x="8.5" y="462.5" width="1234" height="115" fill="none" stroke="#fff"/>
<rect x="1243" y="135" width="2" height="1" fill="#fff"/>
<rect x="1243" y="167" width="2" height="1" fill="#fff"/>
<rect x="1243" y="200" width="2" height="1" fill="#fff"/>
<rect x="1243" y="232" width="2" height="1" fill="#fff"/>
<rect x="1243" y="296" width="2" height="1" fill="#fff"/>
<rect x="1243" y="328" width="2" height="1" fill="#fff"/>
<rect x="1243" y="361" width="2" height="1" fill="#fff"/>
<rect x="1243" y="393" width="2" height="1" fill="#fff"/>
<rect x="1243" y="425" width="2" height="1" fill="#fff"/>
<rect x="1243" y="458" width="2" height="1" fill="#fff"/>
<rect x="1243" y="464" width="1" height="2" fill="#fff"/>
<rect x="9" y="578" width="1" height="4" fill="#fff"/>
<rect x="73" y="578" width="1" height="4" fill="#fff"/>
<rect x="137" y="578" width="1" height="4" fill="#fff"/>
<rect x="201" y="578" width="1" height="4" fill="#fff"/>
<rect x="265" y="578" width="1" height="4" fill="#fff"/>
<rect x="329" y="578" width="1" height="4" fill="#fff"/>
<rect x="393" y="578" width="1" height="4" fill="#fff"/>
<rect x="457" y="578" width="1" height="4" fill="#fff"/>
<rect x="521" y="578" width="1" height="4" fill="#fff"/>
<rect x="585" y="578" width="1" height="4" fill="#fff"/>
<rect x="649" y="578" width="1" height="4" fill="#fff"/>
<rect x="713" y="578" width="1" height="4" fill="#fff"/>
<rect x="777" y="578" width="1" height="4" fill="#fff"/>
<rect x="841" y="578" width="1" height="4" fill="#fff"/>
<rect x="905" y="578" width="1" height="4" fill="#fff"/>
<rect x="969" y="578" width="1" height="4" fill="#fff"/>
<polygon points="989,109 998,109 993.5,114" fill="#778899" shape-rendering="auto"/>
</svg>
<div style="position:absolute;font:10px 'Liberation Sans', sans-serif;color:#fff;white-space:pre;line-height:11px;letter-spacing:-0.4px;left:12px;top:111px;letter-spacing:-0.3px">EURGBP,H1  0.90643 0.90671 0.90611 0.90612</div>
<div style="position:absolute;font:10px 'Liberation Sans', sans-serif;color:#fff;white-space:pre;line-height:11px;letter-spacing:-0.4px;left:13px;top:253px;letter-spacing:-0.32px">#15609886 sell</div>
<div style="position:absolute;font:10px 'Liberation Sans', sans-serif;color:#fff;white-space:pre;line-height:11px;letter-spacing:-0.4px;left:12px;top:467px;letter-spacing:-0.36px">Stoch(5,3,3) 40.9229 56.4160</div>
<div style="position:absolute;font:10px 'Liberation Sans', sans-serif;color:#fff;white-space:pre;line-height:11px;letter-spacing:-0.4px;left:1248px;top:130px;letter-spacing:-0.3px">0.91115</div>
<div style="position:absolute;font:10px 'Liberation Sans', sans-serif;color:#fff;white-space:pre;line-height:11px;letter-spacing:-0.4px;left:1248px;top:162px;letter-spacing:-0.3px">0.90990</div>
<div style="position:absolute;font:10px 'Liberation Sans', sans-serif;color:#fff;white-space:pre;line-height:11px;letter-spacing:-0.4px;left:1248px;top:195px;letter-spacing:-0.3px">0.90870</div>
<div style="position:absolute;font:10px 'Liberation Sans', sans-serif;color:#fff;white-space:pre;line-height:11px;letter-spacing:-0.4px;left:1248px;top:227px;letter-spacing:-0.3px">0.90750</div>
<div style="position:absolute;font:10px 'Liberation Sans', sans-serif;color:#fff;white-space:pre;line-height:11px;letter-spacing:-0.4px;left:1248px;top:291px;letter-spacing:-0.3px">0.90500</div>
<div style="position:absolute;font:10px 'Liberation Sans', sans-serif;color:#fff;white-space:pre;line-height:11px;letter-spacing:-0.4px;left:1248px;top:323px;letter-spacing:-0.3px">0.90380</div>
<div style="position:absolute;font:10px 'Liberation Sans', sans-serif;color:#fff;white-space:pre;line-height:11px;letter-spacing:-0.4px;left:1248px;top:356px;letter-spacing:-0.3px">0.90260</div>
<div style="position:absolute;font:10px 'Liberation Sans', sans-serif;color:#fff;white-space:pre;line-height:11px;letter-spacing:-0.4px;left:1248px;top:388px;letter-spacing:-0.3px">0.90135</div>
<div style="position:absolute;font:10px 'Liberation Sans', sans-serif;color:#fff;white-space:pre;line-height:11px;letter-spacing:-0.4px;left:1248px;top:420px;letter-spacing:-0.3px">0.90010</div>
<div style="position:absolute;font:10px 'Liberation Sans', sans-serif;color:#fff;white-space:pre;line-height:11px;letter-spacing:-0.4px;left:1248px;top:453px;letter-spacing:-0.3px">0.89885</div>
<div style="position:absolute;font:10px 'Liberation Sans', sans-serif;color:#fff;white-space:pre;line-height:11px;letter-spacing:-0.4px;left:1248px;top:258px;letter-spacing:-0.3px">0.90625</div>
<div style="position:absolute;left:1245px;top:261px;width:37px;height:11px;background:#fff"></div>
<div style="position:absolute;left:1243px;top:263px;width:2px;height:1px;background:#fff"></div>
<div style="position:absolute;font:10px 'Liberation Sans', sans-serif;color:#fff;white-space:pre;line-height:11px;letter-spacing:-0.4px;left:1248px;top:262px;color:#000;letter-spacing:-0.3px">0.90612</div>
<div style="position:absolute;font:10px 'Liberation Sans', sans-serif;color:#fff;white-space:pre;line-height:11px;letter-spacing:-0.4px;left:1245px;top:465px;letter-spacing:-0.2px">100</div>
<div style="position:absolute;font:10px 'Liberation Sans', sans-serif;color:#fff;white-space:pre;line-height:11px;letter-spacing:-0.4px;left:1245px;top:481px;letter-spacing:-0.2px">80</div>
<div style="position:absolute;font:10px 'Liberation Sans', sans-serif;color:#fff;white-space:pre;line-height:11px;letter-spacing:-0.4px;left:1245px;top:515px;letter-spacing:-0.2px">50</div>
<div style="position:absolute;font:10px 'Liberation Sans', sans-serif;color:#fff;white-space:pre;line-height:11px;letter-spacing:-0.4px;left:1245px;top:549px;letter-spacing:-0.2px">20</div>
<div style="position:absolute;font:10px 'Liberation Sans', sans-serif;color:#fff;white-space:pre;line-height:11px;letter-spacing:-0.4px;left:1245px;top:566px;letter-spacing:-0.2px">0</div>
<div style="position:absolute;font:10px 'Liberation Sans', sans-serif;color:#fff;white-space:pre;line-height:11px;letter-spacing:-0.4px;left:7px;top:581px">2 Dec 2009</div>
<div style="position:absolute;font:10px 'Liberation Sans', sans-serif;color:#fff;white-space:pre;line-height:11px;letter-spacing:-0.4px;left:71px;top:581px">3 Dec 03:00</div>
<div style="position:absolute;font:10px 'Liberation Sans', sans-serif;color:#fff;white-space:pre;line-height:11px;letter-spacing:-0.4px;left:135px;top:581px">3 Dec 11:00</div>
<div style="position:absolute;font:10px 'Liberation Sans', sans-serif;color:#fff;white-space:pre;line-height:11px;letter-spacing:-0.4px;left:199px;top:581px">3 Dec 19:00</div>
<div style="position:absolute;font:10px 'Liberation Sans', sans-serif;color:#fff;white-space:pre;line-height:11px;letter-spacing:-0.4px;left:263px;top:581px">4 Dec 03:00</div>
<div style="position:absolute;font:10px 'Liberation Sans', sans-serif;color:#fff;white-space:pre;line-height:11px;letter-spacing:-0.4px;left:327px;top:581px">4 Dec 11:00</div>
<div style="position:absolute;font:10px 'Liberation Sans', sans-serif;color:#fff;white-space:pre;line-height:11px;letter-spacing:-0.4px;left:391px;top:581px">4 Dec 19:00</div>
<div style="position:absolute;font:10px 'Liberation Sans', sans-serif;color:#fff;white-space:pre;line-height:11px;letter-spacing:-0.4px;left:455px;top:581px">7 Dec 03:00</div>
<div style="position:absolute;font:10px 'Liberation Sans', sans-serif;color:#fff;white-space:pre;line-height:11px;letter-spacing:-0.4px;left:519px;top:581px">7 Dec 11:00</div>
<div style="position:absolute;font:10px 'Liberation Sans', sans-serif;color:#fff;white-space:pre;line-height:11px;letter-spacing:-0.4px;left:583px;top:581px">7 Dec 19:00</div>
<div style="position:absolute;font:10px 'Liberation Sans', sans-serif;color:#fff;white-space:pre;line-height:11px;letter-spacing:-0.4px;left:647px;top:581px">8 Dec 03:00</div>
<div style="position:absolute;font:10px 'Liberation Sans', sans-serif;color:#fff;white-space:pre;line-height:11px;letter-spacing:-0.4px;left:711px;top:581px">8 Dec 11:00</div>
<div style="position:absolute;font:10px 'Liberation Sans', sans-serif;color:#fff;white-space:pre;line-height:11px;letter-spacing:-0.4px;left:775px;top:581px">8 Dec 19:00</div>
<div style="position:absolute;font:10px 'Liberation Sans', sans-serif;color:#fff;white-space:pre;line-height:11px;letter-spacing:-0.4px;left:839px;top:581px">9 Dec 03:00</div>
<div style="position:absolute;font:10px 'Liberation Sans', sans-serif;color:#fff;white-space:pre;line-height:11px;letter-spacing:-0.4px;left:903px;top:581px">9 Dec 11:00</div>
<div style="position:absolute;font:10px 'Liberation Sans', sans-serif;color:#fff;white-space:pre;line-height:11px;letter-spacing:-0.4px;left:967px;top:581px">9 Dec 19:00</div>
<!-- tabs -->
<div class="a" style="left:4px;top:595px;width:1280px;height:2px;background:#f4f4f4"></div>
<div class="a" style="left:4px;top:597px;width:1280px;height:1px;background:#000"></div><div class="a" style="left:1283px;top:598px;width:1px;height:19px;background:#fff"></div>
<div class="a" style="left:4px;top:598px;width:2px;height:19px;background:#a0a0a4"></div>
<div class="a" style="left:4px;top:617px;width:1280px;height:1px;background:#fff"></div>
<div class="t" style="left:19px;top:600px;color:#808080;letter-spacing:-0.45px">USDJPY,Daily</div>
<div class="t" style="left:105px;top:600px;color:#808080;letter-spacing:-0.45px">GBPJPY,Daily</div>
<div class="t" style="left:190px;top:600px;color:#808080;letter-spacing:-0.45px">USDCAD,H4</div>
<div class="t" style="left:271px;top:600px;color:#808080;letter-spacing:-0.45px">GBPCHF,H4</div>
<div class="t" style="left:431px;top:600px;color:#808080;letter-spacing:-0.45px">GBPUSD,H4</div>
<div class="t" style="left:511px;top:600px;color:#808080;letter-spacing:-0.45px">EURAUD,H1</div>
<div class="t" style="left:592px;top:600px;color:#808080;letter-spacing:-0.45px">EURJPY,Daily</div>
<div class="t" style="left:679px;top:600px;color:#808080;letter-spacing:-0.45px">AUDJPY,Daily</div>
<div class="t" style="left:767px;top:600px;color:#808080;letter-spacing:-0.45px">AUDUSD,H1</div>
<div class="a" style="left:96px;top:600px;width:1px;height:13px;background:#808080"></div>
<div class="a" style="left:180px;top:600px;width:1px;height:13px;background:#808080"></div>
<div class="a" style="left:260px;top:600px;width:1px;height:13px;background:#808080"></div>
<div class="a" style="left:500px;top:600px;width:1px;height:13px;background:#808080"></div>
<div class="a" style="left:581px;top:600px;width:1px;height:13px;background:#808080"></div>
<div class="a" style="left:668px;top:600px;width:1px;height:13px;background:#808080"></div>
<div class="a" style="left:756px;top:600px;width:1px;height:13px;background:#808080"></div>
<div class="a" style="left:836px;top:600px;width:1px;height:13px;background:#808080"></div>
<div class="a" style="left:340px;top:596px;width:79px;height:19px;background:#fff;border:1px solid #000;border-top:none"></div>
<div class="t" style="left:351px;top:600px;letter-spacing:-0.45px">EURGBP,H1</div>
<svg class="a" style="left:1252px;top:601px" width="30" height="12" shape-rendering="crispEdges"><path d="M7 3 L4 6 L7 9 Z" fill="#a0a0a0"/><path d="M21 3 L24 6 L21 9 Z" fill="#a0a0a0"/></svg>
<div class="a" style="left:5px;top:635px;width:13px;height:115px;background:#7badde"></div><div class="a" style="left:19px;top:729px;width:1px;height:21px;background:#a0a0a0"></div>
<div class="t" style="left:5px;top:748px;color:#fff;font-size:11px;transform:rotate(-90deg);transform-origin:0 0;letter-spacing:0.2px">Terminal</div>
<svg class="a" style="left:7px;top:623px" width="9" height="8"><path d="M1.5 1.5 L6.5 6.5 M6.5 1.5 L1.5 6.5" stroke="#000" stroke-width="1.6"/></svg>
<div class="a" style="left:19px;top:621px;width:1261px;height:108px;background:#fff;border-top:1px solid #a0a0a0;border-left:1px solid #a0a0a0"></div>
<div class="a" style="left:20px;top:642px;width:1243px;height:1px;background:#c4c4c4"></div>
<div class="a" style="left:20px;top:641px;width:1243px;height:1px;background:#e4e4e4"></div>
<div class="a" style="left:142px;top:624px;width:1px;height:16px;background:#e0e0e0"></div>
<div class="a" style="left:350px;top:624px;width:1px;height:16px;background:#e0e0e0"></div>
<div class="a" style="left:435px;top:624px;width:1px;height:16px;background:#e0e0e0"></div>
<div class="a" style="left:501px;top:624px;width:1px;height:16px;background:#e0e0e0"></div>
<div class="a" style="left:587px;top:624px;width:1px;height:16px;background:#e0e0e0"></div>
<div class="a" style="left:680px;top:624px;width:1px;height:16px;background:#e0e0e0"></div>
<div class="a" style="left:774px;top:624px;width:1px;height:16px;background:#e0e0e0"></div>
<div class="a" style="left:868px;top:624px;width:1px;height:16px;background:#e0e0e0"></div>
<div class="a" style="left:962px;top:624px;width:1px;height:16px;background:#e0e0e0"></div>
<div class="a" style="left:1056px;top:624px;width:1px;height:16px;background:#e0e0e0"></div>
<div class="a" style="left:1150px;top:624px;width:1px;height:16px;background:#e0e0e0"></div>
<div class="t" style="left:26px;top:626px">Order</div><div class="t" style="left:66px;top:626px;color:#a0a0a0">/</div>
<div class="t" style="right:945px;top:626px">Time</div>
<div class="t" style="right:860px;top:626px">Type</div>
<div class="t" style="right:794px;top:626px">Size</div>
<div class="t" style="right:708px;top:626px">Symbol</div>
<div class="t" style="right:615px;top:626px">Price</div>
<div class="t" style="right:521px;top:626px">S / L</div>
<div class="t" style="right:427px;top:626px">T / P</div>
<div class="t" style="right:333px;top:626px">Price</div>
<div class="t" style="right:239px;top:626px">Commission</div>
<div class="t" style="right:145px;top:626px">Swap</div>
<div class="t" style="right:32px;top:626px">Profit</div>
<div class="a" style="left:20px;top:643px;width:1243px;height:19px;background:#fff"></div>
<div class="a" style="left:20px;top:662px;width:1243px;height:1px;background:#d0d0d0"></div>
<div class="a" style="left:141px;top:643px;width:1px;height:19px;background:#d0d0d0"></div>
<div class="a" style="left:349px;top:643px;width:1px;height:19px;background:#d0d0d0"></div>
<div class="a" style="left:434px;top:643px;width:1px;height:19px;background:#d0d0d0"></div>
<div class="a" style="left:500px;top:643px;width:1px;height:19px;background:#d0d0d0"></div>
<div class="a" style="left:586px;top:643px;width:1px;height:19px;background:#d0d0d0"></div>
<div class="a" style="left:679px;top:643px;width:1px;height:19px;background:#d0d0d0"></div>
<div class="a" style="left:773px;top:643px;width:1px;height:19px;background:#d0d0d0"></div>
<div class="a" style="left:867px;top:643px;width:1px;height:19px;background:#d0d0d0"></div>
<div class="a" style="left:961px;top:643px;width:1px;height:19px;background:#d0d0d0"></div>
<div class="a" style="left:1055px;top:643px;width:1px;height:19px;background:#d0d0d0"></div>
<div class="a" style="left:1149px;top:643px;width:1px;height:19px;background:#d0d0d0"></div>
<svg class="a" style="left:23px;top:645px" width="16" height="17"><defs><linearGradient id="dg" x1="0" y1="0" x2="1" y2="1"><stop offset="0" stop-color="#fff"/><stop offset="1" stop-color="#d8d8d8"/></linearGradient></defs><path d="M0.7 1.5 Q0.7 0.7 1.5 0.7 H8.5 L11.3 3.5 V13.5 Q11.3 14.3 10.5 14.3 H1.5 Q0.7 14.3 0.7 13.5 Z" fill="url(#dg)" stroke="#404040" stroke-width="1.2"/><path d="M8.5 1 V3.5 H11" fill="none" stroke="#808080"/><circle cx="10.8" cy="12" r="3.6" fill="#e05a18" stroke="#a83808" stroke-width="0.9"/><circle cx="10" cy="11" r="1.3" fill="#ffc090"/></svg>
<div class="t" style="left:45px;top:647px">15285646</div>
<div class="t" style="right:943px;top:647px">2009.12.07 10:27</div>
<div class="t" style="right:858px;top:647px">sell</div>
<div class="t" style="right:792px;top:647px">0.10</div>
<div class="t" style="right:706px;top:647px">gbpjpy</div>
<div class="t" style="right:613px;top:647px">147.163</div>
<div class="t" style="right:519px;top:647px">145.886</div>
<div class="t" style="right:425px;top:647px">140.885</div>
<div class="t" style="right:331px;top:647px">142.529</div>
<div class="t" style="right:237px;top:647px">0.00</div>
<div class="t" style="right:143px;top:647px">-0.72</div>
<div class="t" style="right:30px;top:647px">527.20</div>
<div class="a" style="left:20px;top:663px;width:1243px;height:19px;background:#ebebeb"></div>
<div class="a" style="left:20px;top:682px;width:1243px;height:1px;background:#d0d0d0"></div>
<div class="a" style="left:141px;top:663px;width:1px;height:19px;background:#d0d0d0"></div>
<div class="a" style="left:349px;top:663px;width:1px;height:19px;background:#d0d0d0"></div>
<div class="a" style="left:434px;top:663px;width:1px;height:19px;background:#d0d0d0"></div>
<div class="a" style="left:500px;top:663px;width:1px;height:19px;background:#d0d0d0"></div>
<div class="a" style="left:586px;top:663px;width:1px;height:19px;background:#d0d0d0"></div>
<div class="a" style="left:679px;top:663px;width:1px;height:19px;background:#d0d0d0"></div>
<div class="a" style="left:773px;top:663px;width:1px;height:19px;background:#d0d0d0"></div>
<div class="a" style="left:867px;top:663px;width:1px;height:19px;background:#d0d0d0"></div>
<div class="a" style="left:961px;top:663px;width:1px;height:19px;background:#d0d0d0"></div>
<div class="a" style="left:1055px;top:663px;width:1px;height:19px;background:#d0d0d0"></div>
<div class="a" style="left:1149px;top:663px;width:1px;height:19px;background:#d0d0d0"></div>
<svg class="a" style="left:23px;top:665px" width="16" height="17"><defs><linearGradient id="dg" x1="0" y1="0" x2="1" y2="1"><stop offset="0" stop-color="#fff"/><stop offset="1" stop-color="#d8d8d8"/></linearGradient></defs><path d="M0.7 1.5 Q0.7 0.7 1.5 0.7 H8.5 L11.3 3.5 V13.5 Q11.3 14.3 10.5 14.3 H1.5 Q0.7 14.3 0.7 13.5 Z" fill="url(#dg)" stroke="#404040" stroke-width="1.2"/><path d="M8.5 1 V3.5 H11" fill="none" stroke="#808080"/><circle cx="10.8" cy="12" r="3.6" fill="#e05a18" stroke="#a83808" stroke-width="0.9"/><circle cx="10" cy="11" r="1.3" fill="#ffc090"/></svg>
<div class="t" style="left:45px;top:667px">15424621</div>
<div class="t" style="right:943px;top:667px">2009.12.08 13:01</div>
<div class="t" style="right:858px;top:667px">sell</div>
<div class="t" style="right:792px;top:667px">0.20</div>
<div class="t" style="right:706px;top:667px">eurjpy</div>
<div class="t" style="right:613px;top:667px">131.472</div>
<div class="t" style="right:519px;top:667px">130.767</div>
<div class="t" style="right:425px;top:667px">128.452</div>
<div class="t" style="right:331px;top:667px">129.147</div>
<div class="t" style="right:237px;top:667px">0.00</div>
<div class="t" style="right:143px;top:667px">-0.41</div>
<div class="t" style="right:30px;top:667px">529.02</div>
<div class="a" style="left:20px;top:683px;width:1243px;height:19px;background:#fff"></div>
<div class="a" style="left:20px;top:702px;width:1243px;height:1px;background:#d0d0d0"></div>
<div class="a" style="left:141px;top:683px;width:1px;height:19px;background:#d0d0d0"></div>
<div class="a" style="left:349px;top:683px;width:1px;height:19px;background:#d0d0d0"></div>
<div class="a" style="left:434px;top:683px;width:1px;height:19px;background:#d0d0d0"></div>
<div class="a" style="left:500px;top:683px;width:1px;height:19px;background:#d0d0d0"></div>
<div class="a" style="left:586px;top:683px;width:1px;height:19px;background:#d0d0d0"></div>
<div class="a" style="left:679px;top:683px;width:1px;height:19px;background:#d0d0d0"></div>
<div class="a" style="left:773px;top:683px;width:1px;height:19px;background:#d0d0d0"></div>
<div class="a" style="left:867px;top:683px;width:1px;height:19px;background:#d0d0d0"></div>
<div class="a" style="left:961px;top:683px;width:1px;height:19px;background:#d0d0d0"></div>
<div class="a" style="left:1055px;top:683px;width:1px;height:19px;background:#d0d0d0"></div>
<div class="a" style="left:1149px;top:683px;width:1px;height:19px;background:#d0d0d0"></div>
<svg class="a" style="left:23px;top:685px" width="16" height="17"><defs><linearGradient id="dg" x1="0" y1="0" x2="1" y2="1"><stop offset="0" stop-color="#fff"/><stop offset="1" stop-color="#d8d8d8"/></linearGradient></defs><path d="M0.7 1.5 Q0.7 0.7 1.5 0.7 H8.5 L11.3 3.5 V13.5 Q11.3 14.3 10.5 14.3 H1.5 Q0.7 14.3 0.7 13.5 Z" fill="url(#dg)" stroke="#404040" stroke-width="1.2"/><path d="M8.5 1 V3.5 H11" fill="none" stroke="#808080"/><circle cx="10.8" cy="12" r="3.6" fill="#e05a18" stroke="#a83808" stroke-width="0.9"/><circle cx="10" cy="11" r="1.3" fill="#ffc090"/></svg>
<div class="t" style="left:45px;top:687px">15609886</div>
<div class="t" style="right:943px;top:687px">2009.12.09 21:10</div>
<div class="t" style="right:858px;top:687px">sell</div>
<div class="t" style="right:792px;top:687px">0.20</div>
<div class="t" style="right:706px;top:687px">eurgbp</div>
<div class="t" style="right:613px;top:687px">0.90622</div>
<div class="t" style="right:519px;top:687px">0.90740</div>
<div class="t" style="right:425px;top:687px">0.90232</div>
<div class="t" style="right:331px;top:687px">0.90624</div>
<div class="t" style="right:237px;top:687px">0.00</div>
<div class="t" style="right:143px;top:687px">0.00</div>
<div class="t" style="right:30px;top:687px">-0.65</div>
<div class="a" style="left:20px;top:703px;width:1243px;height:19px;background:#c8c8c8"></div>
<svg class="a" style="left:23px;top:705px" width="12" height="14"><rect x="0.5" y="0.5" width="11" height="13" rx="1.5" fill="#fafafa" stroke="#606060"/><path d="M6 3 L10 7 L7.5 7 L7.5 10 L4.5 10 L4.5 7 L2 7 Z" fill="#18a018" stroke="#0a6a0a" stroke-width="0.6"/></svg>
<div class="t" style="left:44px;top:705px;font-weight:bold;letter-spacing:0.42px">Balance: 1 069.41  Equity: 3 129.49  Margin: 227.41  Free margin: 2 902.08  Margin level: 1376.14%</div>
<div class="t" style="right:31px;top:705px;font-weight:bold;letter-spacing:0.42px">2 060.08</div>
<div class="a" style="left:1263px;top:622px;width:17px;height:107px;background:linear-gradient(to right,#f4f8fc,#e4ecf8)"></div>
<div class="a" style="left:1264px;top:622px;width:13px;height:15px;border:1px solid #98b0d8;border-radius:2px;background:linear-gradient(to bottom,#f4f8fe,#c0d2ee)"></div>
<svg class="a" style="left:1265px;top:626px" width="12" height="10"><path d="M2 7 L6 3 L10 7" fill="none" stroke="#4a5a80" stroke-width="2"/></svg>
<div class="a" style="left:1264px;top:664px;width:13px;height:46px;border:1px solid #98b0d8;border-radius:2px;background:linear-gradient(to right,#c8d8f4,#dce8fa,#c0d0f0)"></div>
<svg class="a" style="left:1266px;top:683px" width="10" height="8" shape-rendering="crispEdges"><path d="M2 1.5H8M2 3.5H8M2 5.5H8" stroke="#8898c0"/></svg>
<div class="a" style="left:1264px;top:712px;width:13px;height:14px;border:1px solid #98b0d8;border-radius:2px;background:linear-gradient(to bottom,#f4f8fe,#c0d2ee)"></div>
<svg class="a" style="left:1265px;top:716px" width="12" height="10"><path d="M2 3 L6 7 L10 3" fill="none" stroke="#4a5a80" stroke-width="2"/></svg>
<div class="a" style="left:19px;top:729px;width:1261px;height:1px;background:#000"></div><div class="a" style="left:1281px;top:618px;width:1px;height:132px;background:#fff"></div>
<div class="a" style="left:22px;top:729px;width:47px;height:17px;background:#fff;border:1px solid #000;border-top:none"></div>
<div class="t" style="left:32px;top:732px">Trade</div>
<div class="t" style="left:80px;top:732px;color:#808080;letter-spacing:-0.1px">Account History</div>
<div class="t" style="left:175px;top:732px;color:#808080;letter-spacing:-0.1px">News</div>
<div class="t" style="left:221px;top:732px;color:#808080;letter-spacing:-0.1px">Alerts</div>
<div class="t" style="left:269px;top:732px;color:#808080;letter-spacing:-0.1px">Mailbox</div>
<div class="t" style="left:325px;top:732px;color:#808080;letter-spacing:-0.1px">Experts</div>
<div class="t" style="left:382px;top:732px;color:#808080;letter-spacing:-0.1px">Journal</div>
<div class="a" style="left:166px;top:733px;width:1px;height:12px;background:#808080"></div>
<div class="a" style="left:212px;top:733px;width:1px;height:12px;background:#808080"></div>
<div class="a" style="left:259px;top:733px;width:1px;height:12px;background:#808080"></div>
<div class="a" style="left:313px;top:733px;width:1px;height:12px;background:#808080"></div>
<div class="a" style="left:372px;top:733px;width:1px;height:12px;background:#808080"></div>
<div class="a" style="left:428px;top:733px;width:1px;height:12px;background:#808080"></div>
<!-- status -->
<div class="a" style="left:4px;top:749px;width:1280px;height:1px;background:#fbfbfb"></div>
<div class="a" style="left:4px;top:752px;width:1280px;height:1px;background:#a5a5a8"></div>
<div class="a" style="left:4px;top:753px;width:1280px;height:1px;background:#fff"></div>
<div class="t" style="left:5px;top:759px;letter-spacing:-0.15px">For Help, press F1</div>
<div class="a" style="left:563px;top:757px;width:1px;height:16px;background:#a5a5a8"></div>
<div class="t" style="left:569px;top:759px">Default</div>
<div class="a" style="left:672px;top:757px;width:1px;height:16px;background:#a5a5a8"></div>
<div class="a" style="left:774px;top:757px;width:1px;height:16px;background:#a5a5a8"></div><div class="a" style="left:846px;top:757px;width:1px;height:16px;background:#a5a5a8"></div><div class="a" style="left:917px;top:757px;width:1px;height:16px;background:#a5a5a8"></div><div class="a" style="left:986px;top:757px;width:1px;height:16px;background:#a5a5a8"></div><div class="a" style="left:1057px;top:757px;width:1px;height:16px;background:#a5a5a8"></div><div class="a" style="left:1122px;top:757px;width:1px;height:16px;background:#a5a5a8"></div>
<svg class="a" style="left:1127px;top:758px" width="26" height="15" shape-rendering="crispEdges">
<rect x="1" y="1" width="2" height="9" fill="#5a7a10"/>
<rect x="1" y="10" width="2" height="4" fill="#103a60"/>
<rect x="4" y="1" width="2" height="9" fill="#5a7a10"/>
<rect x="4" y="9" width="2" height="5" fill="#103a60"/>
<rect x="7" y="1" width="2" height="9" fill="#5a7a10"/>
<rect x="7" y="8" width="2" height="6" fill="#103a60"/>
<rect x="10" y="1" width="2" height="9" fill="#5a7a10"/>
<rect x="10" y="7" width="2" height="7" fill="#103a60"/>
<rect x="13" y="1" width="2" height="9" fill="#5a7a10"/>
<rect x="13" y="6" width="2" height="8" fill="#103a60"/>
<rect x="16" y="1" width="2" height="9" fill="#5a7a10"/>
<rect x="16" y="5" width="2" height="9" fill="#103a60"/>
<rect x="19" y="1" width="2" height="9" fill="#5a7a10"/>
<rect x="19" y="4" width="2" height="10" fill="#103a60"/>
<rect x="22" y="1" width="2" height="9" fill="#5a7a10"/>
<rect x="22" y="3" width="2" height="11" fill="#103a60"/>
</svg>
<div class="t" style="left:1182px;top:759px">32/0 kb</div>
<svg class="a" style="left:1268px;top:758px" width="16" height="16" shape-rendering="crispEdges">
<path d="M15 3 L3 15 M15 7 L7 15 M15 11 L11 15" stroke="#a0a0a0" stroke-width="1.2"/>
<path d="M16 4 L4 16 M16 8 L8 16 M16 12 L12 16" stroke="#fff" stroke-width="1"/></svg>
<div class="a" style="left:4px;top:774px;width:1132px;height:1px;background:#2c50b0"></div><div class="a" style="left:1136px;top:774px;width:148px;height:1px;background:#4a7890"></div>
<div class="a" style="left:4px;top:775px;width:93px;height:3px;background:#7cc47c"></div>
<div class="a" style="left:97px;top:775px;width:1039px;height:3px;background:#86bde8"></div>
<div class="a" style="left:1136px;top:775px;width:152px;height:3px;background:#e8f0f8"></div>
</body></html>
